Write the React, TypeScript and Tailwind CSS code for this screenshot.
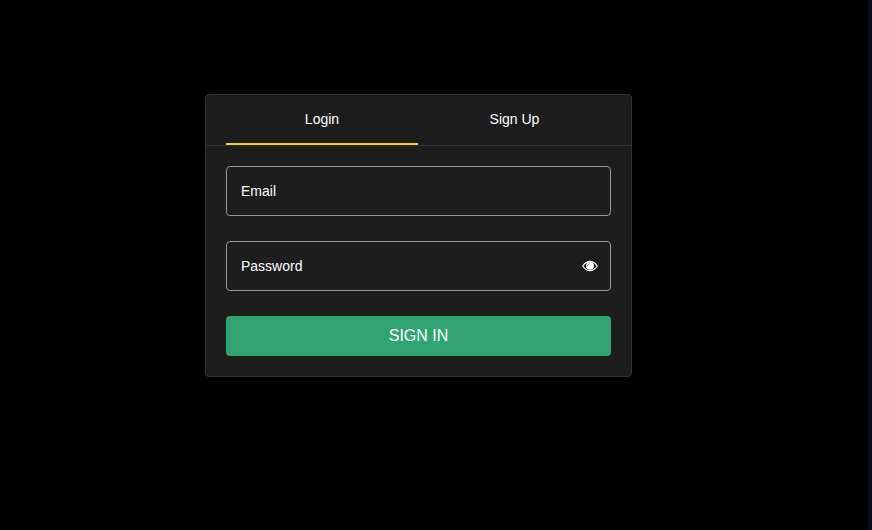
const font = { fontFamily: '"Liberation Sans", Arial, sans-serif' }

function EyeIcon() {
  return (
    <svg className="absolute right-[11px] top-[17px]" width="18" height="14" viewBox="0 0 18 14" fill="none">
      <path d="M1.700 7C3.800 3.900 6.200 2.300 9 2.300s5.200 1.600 7.300 4.700c-2.100 3.100-4.500 4.700-7.300 4.700S3.800 10.100 1.700 7Z" fill="#1e1e1e" stroke="#ffffff" strokeWidth="1.200" />
      <circle cx="9" cy="6.800" r="4" fill="#ffffff" />
      <path d="M6.800 7.500C6.800 5.900 7.500 4.900 8.800 4.600" stroke="#c9a59a" strokeWidth="1" />
    </svg>
  )
}

function Field({ label, icon }: { label: string; icon?: boolean }) {
  return (
    <div className="relative flex h-[50px] items-center rounded-[4px] border border-[#969696] pl-[14px] text-[14px] text-white">
      {label}
      {icon && <EyeIcon />}
    </div>
  )
}

export default function App() {
  return (
    <div className="flex h-[530px] w-[872px] bg-black" style={font}>
      <main className="flex-1 pt-[94px] pl-[205px]">
        <div className="h-[283px] w-[427px] rounded-[4px] border border-[#333333] bg-[#1d1d1d]">
          <div className="flex h-[51px] border-b border-[#333333] px-[20px] text-[14px] text-white">
            <div className="flex h-[50px] w-[192px] items-center justify-center border-b-2 border-[#f7c948]">Login</div>
            <div className="flex h-[50px] flex-1 items-center justify-center pb-[2px]">Sign Up</div>
          </div>
          <div className="flex flex-col gap-[25px] px-[20px] pt-[20px]">
            <Field label="Email" />
            <Field label="Password" icon />
            <button className="h-[40px] rounded-[4px] bg-[#32a473] text-[16px] text-white">SIGN IN</button>
          </div>
        </div>
      </main>
      <div className="w-[4px] bg-[#0a0a1e]" />
    </div>
  )
}
